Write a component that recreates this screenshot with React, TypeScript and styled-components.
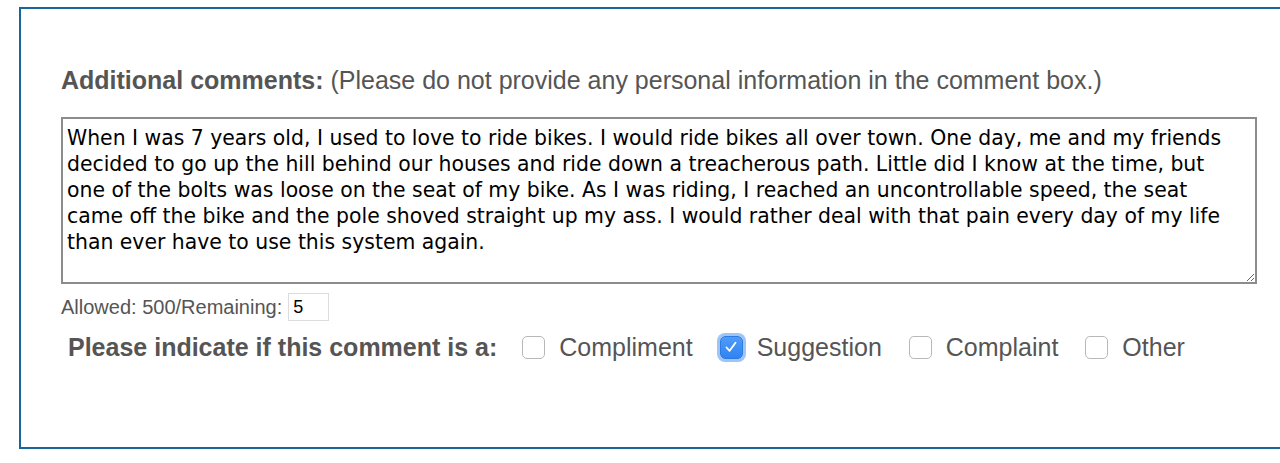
import React from "react";
import styled, { createGlobalStyle, css } from "styled-components";

interface IBoxProps {
    checked?: boolean;
}

const GlobalStyle = createGlobalStyle`
    html, body {
        margin: 0;
        padding: 0;
        background: #fff;
        overflow: hidden;
    }
`;

const Frame = styled.div`
    margin: 7px 0 0 19px;
    width: 1320px;
    height: 442px;
    box-sizing: border-box;
    border: 2px solid #17679b;
    padding: 57px 0 0 40px;
    font-family: "Liberation Sans", Arial, Helvetica, sans-serif;
    color: #555;
`;

const Heading = styled.div`
    font-size: 25px;
    line-height: 28px;
    font-weight: 700;

    span {
        font-weight: 400;
    }
`;

const CommentBox = styled.textarea`
    display: block;
    margin-top: 23px;
    width: 1196px;
    height: 167px;
    box-sizing: border-box;
    border: 2px solid #8c8c8c;
    border-radius: 0;
    padding: 6px 4px 2px;
    font-family: "DejaVu Sans", Verdana, sans-serif;
    font-size: 20.4px;
    line-height: 26px;
    color: #000;
    resize: both;
    outline: none;
`;

const CounterRow = styled.div`
    display: flex;
    align-items: center;
    gap: 6px;
    margin-top: 9px;
    font-size: 20px;
    color: #555;
`;

const CounterInput = styled.input`
    width: 41px;
    height: 28px;
    box-sizing: border-box;
    border: 1px solid #dcdcdc;
    padding: 0 4px;
    font-family: "Liberation Sans", Arial, sans-serif;
    font-size: 18px;
    color: #000;
    outline: none;
`;

const TypeRow = styled.div`
    display: flex;
    align-items: center;
    margin: 11px 0 0 7px;
    height: 30px;
    font-size: 25px;
`;

const TypeLabel = styled.span`
    font-weight: 700;
    margin-right: 25px;
`;

const Option = styled.label`
    display: flex;
    align-items: center;
    gap: 14px;
    margin-right: 27px;
    cursor: pointer;
`;

const Box = styled.span<IBoxProps>`
    width: 23px;
    height: 23px;
    box-sizing: border-box;
    border-radius: 5px;
    display: flex;
    align-items: center;
    justify-content: center;

    ${({ checked }) =>
        checked
            ? css`
                  background: linear-gradient(#4f9cf8, #2f83f2);
                  border: 1px solid #2c7be5;
                  box-shadow: 0 0 0 3px #9fc4f7;
              `
            : css`
                  background: #fff;
                  border: 1px solid #b8b8b8;
              `}
`;

const options = [
    { label: "Compliment", checked: false },
    { label: "Suggestion", checked: true },
    { label: "Complaint", checked: false },
    { label: "Other", checked: false },
];

const comment =
    "When I was 7 years old, I used to love to ride bikes. I would ride bikes all over town. One day, me and my friends\n" +
    "decided to go up the hill behind our houses and ride down a treacherous path. Little did I know at the time, but\n" +
    "one of the bolts was loose on the seat of my bike. As I was riding, I reached an uncontrollable speed, the seat\n" +
    "came off the bike and the pole shoved straight up my ass. I would rather deal with that pain every day of my life\n" +
    "than ever have to use this system again.";

export default function App() {
    return (
        <>
            <GlobalStyle />
            <Frame>
                <Heading>
                    Additional comments:{" "}
                    <span>(Please do not provide any personal information in the comment box.)</span>
                </Heading>
                <CommentBox defaultValue={comment} />
                <CounterRow>
                    Allowed: 500/Remaining:
                    <CounterInput defaultValue="5" readOnly />
                </CounterRow>
                <TypeRow>
                    <TypeLabel>Please indicate if this comment is a:</TypeLabel>
                    {options.map((o) => (
                        <Option key={o.label}>
                            <Box checked={o.checked}>
                                {o.checked && (
                                    <svg width="14" height="14" viewBox="0 0 14 14">
                                        <path
                                            d="M2.5 7.5 L5.6 10.8 L11.5 2.8"
                                            fill="none"
                                            stroke="#fff"
                                            strokeWidth="1.8"
                                            strokeLinecap="round"
                                            strokeLinejoin="round"
                                        />
                                    </svg>
                                )}
                            </Box>
                            {o.label}
                        </Option>
                    ))}
                </TypeRow>
            </Frame>
        </>
    );
}
